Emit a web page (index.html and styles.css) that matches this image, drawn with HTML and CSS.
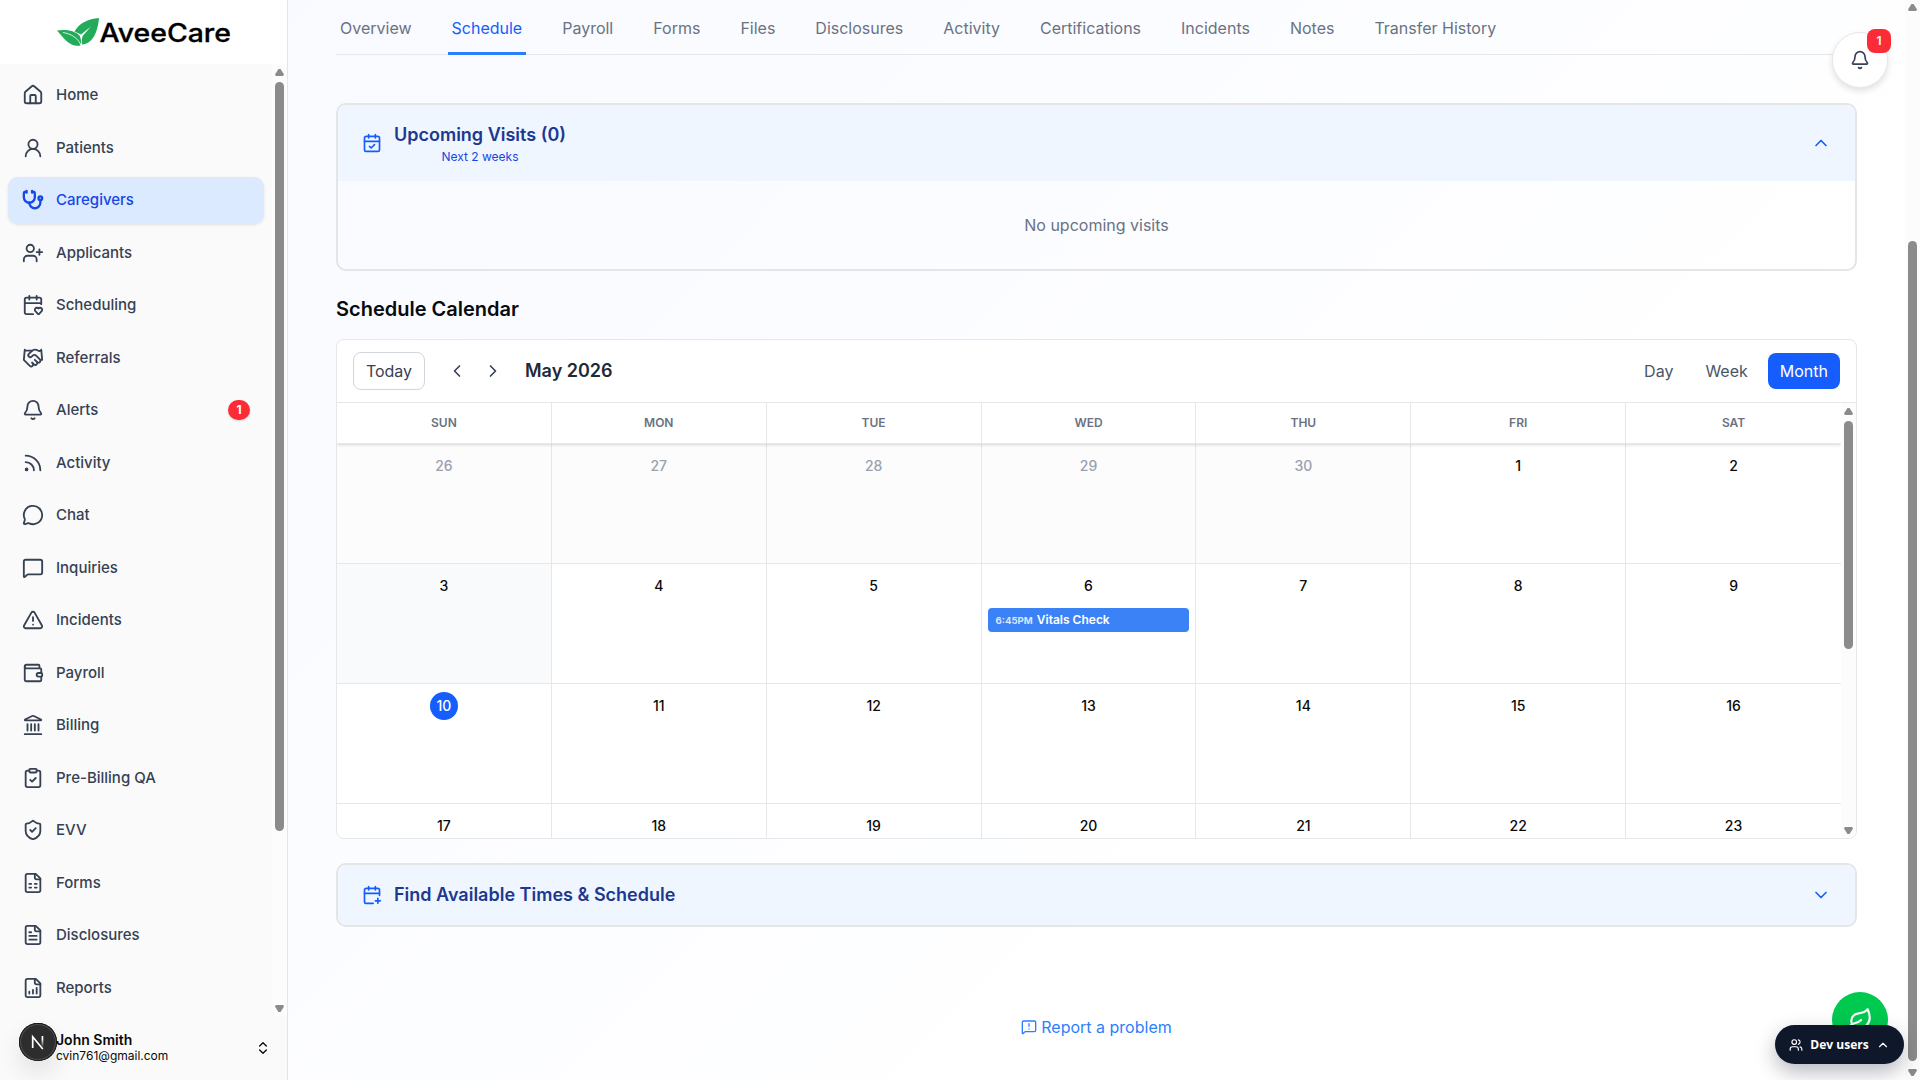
FILE: index.html
```html
<!DOCTYPE html>
<html lang="en">

<head>
    <meta charset="UTF-8">
    <meta name="viewport" content="width=device-width, initial-scale=1.0">
    <title>AveeCare</title>
    <link rel="stylesheet" href="styles.css">
</head>

<body>
    <!-- icons -->
    <svg class="sprite">
        <symbol id="home" viewBox="0 0 24 24"><path d="M15 21v-8a1 1 0 0 0-1-1h-4a1 1 0 0 0-1 1v8"/><path d="M3 10a2 2 0 0 1 .709-1.528l7-5.999a2 2 0 0 1 2.582 0l7 5.999A2 2 0 0 1 21 10v9a2 2 0 0 1-2 2H5a2 2 0 0 1-2-2z"/></symbol>
        <symbol id="user" viewBox="0 0 24 24"><circle cx="12" cy="8" r="5"/><path d="M20 21a8 8 0 0 0-16 0"/></symbol>
        <symbol id="stethoscope" viewBox="0 0 24 24"><path d="M11 2v2M5 2v2M5 3H4a2 2 0 0 0-2 2v4a6 6 0 0 0 12 0V5a2 2 0 0 0-2-2h-1"/><path d="M8 15a6 6 0 0 0 12 0v-3"/><circle cx="20" cy="10" r="2"/></symbol>
        <symbol id="user-plus" viewBox="0 0 24 24"><path d="M16 21v-2a4 4 0 0 0-4-4H6a4 4 0 0 0-4 4v2"/><circle cx="9" cy="7" r="4"/><path d="M19 8v6M22 11h-6"/></symbol>
        <symbol id="calendar-heart" viewBox="0 0 24 24"><path d="M12.127 22H5a2 2 0 0 1-2-2V6a2 2 0 0 1 2-2h14a2 2 0 0 1 2 2v5.125M3 10h18M8 2v4M16 2v4"/><path d="M14.62 18.8A2.25 2.25 0 1 1 18 15.836a2.25 2.25 0 1 1 3.38 2.966l-2.626 2.856a1 1 0 0 1-1.507 0z"/></symbol>
        <symbol id="handshake" viewBox="0 0 24 24"><path d="m11 17 2 2a1 1 0 1 0 3-3"/><path d="m14 14 2.5 2.5a1 1 0 1 0 3-3l-3.88-3.88a3 3 0 0 0-4.24 0l-.88.88a1 1 0 1 1-3-3l2.81-2.81a5.79 5.79 0 0 1 7.06-.87l.47.28a2 2 0 0 0 1.42.25L21 4"/><path d="m21 3 1 11h-2"/><path d="M3 3 2 14l6.5 6.5a1 1 0 1 0 3-3M3 4h8"/></symbol>
        <symbol id="bell" viewBox="0 0 24 24"><path d="M10.268 21a2 2 0 0 0 3.464 0"/><path d="M3.262 15.326A1 1 0 0 0 4 17h16a1 1 0 0 0 .74-1.673C19.41 13.956 18 12.499 18 8A6 6 0 0 0 6 8c0 4.499-1.411 5.956-2.738 7.326"/></symbol>
        <symbol id="rss" viewBox="0 0 24 24"><path d="M4 11a9 9 0 0 1 9 9"/><path d="M4 4a16 16 0 0 1 16 16"/><circle cx="5" cy="19" r="1"/></symbol>
        <symbol id="chat" viewBox="0 0 24 24"><path d="M2.992 16.342a2 2 0 0 1 .094 1.167l-1.065 3.29a1 1 0 0 0 1.236 1.168l3.413-.998a2 2 0 0 1 1.099.092 10 10 0 1 0-4.777-4.719"/></symbol>
        <symbol id="message" viewBox="0 0 24 24"><path d="M22 17a2 2 0 0 1-2 2H6.828a2 2 0 0 0-1.414.586l-2.202 2.202A.71.71 0 0 1 2 21.286V5a2 2 0 0 1 2-2h16a2 2 0 0 1 2 2z"/></symbol>
        <symbol id="warning" viewBox="0 0 24 24"><path d="m21.73 18-8-14a2 2 0 0 0-3.48 0l-8 14A2 2 0 0 0 4 21h16a2 2 0 0 0 1.73-3"/><path d="M12 9v4M12 17h.01"/></symbol>
        <symbol id="wallet" viewBox="0 0 24 24"><path d="M19 7V4a1 1 0 0 0-1-1H5a2 2 0 0 0 0 4h15a1 1 0 0 1 1 1v4h-3a2 2 0 0 0 0 4h3a1 1 0 0 0 1-1v-2a1 1 0 0 0-1-1"/><path d="M3 5v14a2 2 0 0 0 2 2h15a1 1 0 0 0 1-1v-4"/></symbol>
        <symbol id="bank" viewBox="0 0 24 24"><path d="M10 18v-7M14 18v-7M18 18v-7M6 18v-7M3 22h18"/><path d="M11.12 2.198a2 2 0 0 1 1.76.006l7.866 3.847c.476.233.31.949-.22.949H3.474c-.53 0-.695-.716-.22-.949z"/></symbol>
        <symbol id="clipboard" viewBox="0 0 24 24"><rect x="8" y="2" width="8" height="4" rx="1"/><path d="M16 4h2a2 2 0 0 1 2 2v14a2 2 0 0 1-2 2H6a2 2 0 0 1-2-2V6a2 2 0 0 1 2-2h2"/><path d="m9 14 2 2 4-4"/></symbol>
        <symbol id="shield" viewBox="0 0 24 24"><path d="M20 13c0 5-3.5 7.5-7.66 8.95a1 1 0 0 1-.67-.01C7.5 20.5 4 18 4 13V6a1 1 0 0 1 1-1c2 0 4.5-1.2 6.24-2.72a1.17 1.17 0 0 1 1.52 0C14.51 3.81 17 5 19 5a1 1 0 0 1 1 1z"/><path d="m9 12 2 2 4-4"/></symbol>
        <symbol id="file-form" viewBox="0 0 24 24"><path d="M15 2H6a2 2 0 0 0-2 2v16a2 2 0 0 0 2 2h12a2 2 0 0 0 2-2V7Z"/><path d="M14 2v4a2 2 0 0 0 2 2h4"/><path d="M8 13h2M14 13h2M8 17h2M14 17h2"/></symbol>
        <symbol id="file-text" viewBox="0 0 24 24"><path d="M15 2H6a2 2 0 0 0-2 2v16a2 2 0 0 0 2 2h12a2 2 0 0 0 2-2V7Z"/><path d="M14 2v4a2 2 0 0 0 2 2h4"/><path d="M10 9H8M16 13H8M16 17H8"/></symbol>
        <symbol id="file-chart" viewBox="0 0 24 24"><path d="M15 2H6a2 2 0 0 0-2 2v16a2 2 0 0 0 2 2h12a2 2 0 0 0 2-2V7Z"/><path d="M14 2v4a2 2 0 0 0 2 2h4"/><path d="M8 18v-2M12 18v-4M16 18v-6"/></symbol>
        <symbol id="up-down" viewBox="0 0 24 24"><path d="m7 15 5 5 5-5M7 9l5-5 5 5"/></symbol>
        <symbol id="calendar-check" viewBox="0 0 24 24"><path d="M8 2v4M16 2v4"/><rect x="3" y="4" width="18" height="18" rx="2"/><path d="M3 10h18M9 16l2 2 4-4"/></symbol>
        <symbol id="calendar-plus" viewBox="0 0 24 24"><path d="M16 19h6M16 2v4M19 16v6M3 10h18M8 2v4"/><path d="M21 12.598V6a2 2 0 0 0-2-2H5a2 2 0 0 0-2 2v14a2 2 0 0 0 2 2h8.5"/></symbol>
        <symbol id="up" viewBox="0 0 24 24"><path d="m18 15-6-6-6 6"/></symbol>
        <symbol id="down" viewBox="0 0 24 24"><path d="m6 9 6 6 6-6"/></symbol>
        <symbol id="left" viewBox="0 0 24 24"><path d="m15 18-6-6 6-6"/></symbol>
        <symbol id="right" viewBox="0 0 24 24"><path d="m9 18 6-6-6-6"/></symbol>
        <symbol id="report" viewBox="0 0 24 24"><path d="M22 17a2 2 0 0 1-2 2H6.828a2 2 0 0 0-1.414.586l-2.202 2.202A.71.71 0 0 1 2 21.286V5a2 2 0 0 1 2-2h16a2 2 0 0 1 2 2z"/><path d="M12 15h.01M12 7v4"/></symbol>
        <symbol id="leaf" viewBox="0 0 24 24"><path d="M11 20A7 7 0 0 1 9.8 6.1C15.5 5 17 4.48 19 2c1 2 2 4.18 2 8 0 5.5-4.78 10-10 10Z"/><path d="M2 21c0-3 1.85-5.36 5.08-6C9.5 14.52 12 13 13 12"/></symbol>
        <symbol id="users" viewBox="0 0 24 24"><path d="M16 21v-2a4 4 0 0 0-4-4H6a4 4 0 0 0-4 4v2"/><circle cx="9" cy="7" r="4"/><path d="M22 21v-2a4 4 0 0 0-3-3.87M16 3.13a4 4 0 0 1 0 7.75"/></symbol>
    </svg>

    <div class="app">
        <aside class="sidebar">
            <div class="logo">
                <svg width="176" height="32" viewBox="0 0 176 32">
                    <path class="logo-leaf" d="M43 1C42 14 37 27 26 27.500C25.600 24 25.500 21.500 27 18.500L35 9.500L25 17.500L18.500 14.500C23 6.500 32 1.500 43 1Z"/>
                    <path class="logo-leaf" d="M1 13.500C9 12 19 13.500 23.500 18.500C25 21.500 25.500 25 24.500 28.500C14 30.500 9 22.500 1 13.500Z"/>
                    <path class="logo-vein" d="M7 15.500C15 17 22 20.500 25 28.500"/>
                    <text class="logo-text" x="43.500" y="25" textLength="131.500" lengthAdjust="spacingAndGlyphs">AveeCare</text>
                </svg>
            </div>
            <div class="nav-wrap">
                <ul class="nav">
                    <li><svg class="icon"><use href="#home"/></svg>Home</li>
                    <li><svg class="icon"><use href="#user"/></svg>Patients</li>
                    <li class="active"><svg class="icon"><use href="#stethoscope"/></svg>Caregivers</li>
                    <li><svg class="icon"><use href="#user-plus"/></svg>Applicants</li>
                    <li><svg class="icon"><use href="#calendar-heart"/></svg>Scheduling</li>
                    <li><svg class="icon"><use href="#handshake"/></svg>Referrals</li>
                    <li><svg class="icon"><use href="#bell"/></svg>Alerts<span class="count">1</span></li>
                    <li><svg class="icon"><use href="#rss"/></svg>Activity</li>
                    <li><svg class="icon"><use href="#chat"/></svg>Chat</li>
                    <li><svg class="icon"><use href="#message"/></svg>Inquiries</li>
                    <li><svg class="icon"><use href="#warning"/></svg>Incidents</li>
                    <li><svg class="icon"><use href="#wallet"/></svg>Payroll</li>
                    <li><svg class="icon"><use href="#bank"/></svg>Billing</li>
                    <li><svg class="icon"><use href="#clipboard"/></svg>Pre-Billing QA</li>
                    <li><svg class="icon"><use href="#shield"/></svg>EVV</li>
                    <li><svg class="icon"><use href="#file-form"/></svg>Forms</li>
                    <li><svg class="icon"><use href="#file-text"/></svg>Disclosures</li>
                    <li><svg class="icon"><use href="#file-chart"/></svg>Reports</li>
                </ul>
                <div class="scrollbar scrollbar-nav">
                    <i class="arrow-up"></i>
                    <i class="thumb"></i>
                    <i class="arrow-down"></i>
                </div>
            </div>
            <div class="account">
                <div class="account-text">
                    <div class="account-name">John Smith</div>
                    <div class="account-mail">cvin761@gmail.com</div>
                </div>
                <svg class="icon icon-16"><use href="#up-down"/></svg>
            </div>
        </aside>

        <main>
            <ul class="tabs">
                <li>Overview</li>
                <li class="active">Schedule</li>
                <li>Payroll</li>
                <li>Forms</li>
                <li>Files</li>
                <li>Disclosures</li>
                <li>Activity</li>
                <li>Certifications</li>
                <li>Incidents</li>
                <li>Notes</li>
                <li>Transfer History</li>
            </ul>

            <section class="card visits">
                <div class="card-head">
                    <svg class="icon icon-20"><use href="#calendar-check"/></svg>
                    <div class="card-title">Upcoming Visits (0)<small>Next 2 weeks</small></div>
                    <svg class="icon icon-20"><use href="#up"/></svg>
                </div>
                <div class="card-body">No upcoming visits</div>
            </section>

            <h2>Schedule Calendar</h2>

            <section class="calendar">
                <div class="toolbar">
                    <button class="today">Today</button>
                    <svg class="icon icon-20 prev"><use href="#left"/></svg>
                    <svg class="icon icon-20 next"><use href="#right"/></svg>
                    <div class="month">May 2026</div>
                    <div class="views">
                        <span>Day</span>
                        <span>Week</span>
                        <span class="active">Month</span>
                    </div>
                </div>
                <div class="calendar-view">
                    <div class="calendar-main">
                        <div class="weekdays">
                            <div>SUN</div>
                            <div>MON</div>
                            <div>TUE</div>
                            <div>WED</div>
                            <div>THU</div>
                            <div>FRI</div>
                            <div>SAT</div>
                        </div>
                        <div class="days">
                            <div class="other"><b>26</b></div>
                            <div class="other"><b>27</b></div>
                            <div class="other"><b>28</b></div>
                            <div class="other"><b>29</b></div>
                            <div class="other"><b>30</b></div>
                            <div><b>1</b></div>
                            <div><b>2</b></div>
                            <div class="hover"><b>3</b></div>
                            <div><b>4</b></div>
                            <div><b>5</b></div>
                            <div><b>6</b><p class="event"><span>6:45PM</span>Vitals Check</p></div>
                            <div><b>7</b></div>
                            <div><b>8</b></div>
                            <div><b>9</b></div>
                            <div class="now"><b>10</b></div>
                            <div><b>11</b></div>
                            <div><b>12</b></div>
                            <div><b>13</b></div>
                            <div><b>14</b></div>
                            <div><b>15</b></div>
                            <div><b>16</b></div>
                            <div><b>17</b></div>
                            <div><b>18</b></div>
                            <div><b>19</b></div>
                            <div><b>20</b></div>
                            <div><b>21</b></div>
                            <div><b>22</b></div>
                            <div><b>23</b></div>
                        </div>
                    </div>
                    <div class="scrollbar scrollbar-calendar">
                        <i class="arrow-up"></i>
                        <i class="thumb"></i>
                        <i class="arrow-down"></i>
                    </div>
                </div>
            </section>

            <section class="card find">
                <div class="card-head">
                    <svg class="icon icon-20"><use href="#calendar-plus"/></svg>
                    <div class="card-title">Find Available Times &amp; Schedule</div>
                    <svg class="icon icon-20"><use href="#down"/></svg>
                </div>
            </section>

            <a class="report"><svg class="icon icon-16"><use href="#report"/></svg>Report a problem</a>
        </main>

        <div class="scrollbar scrollbar-page">
            <i class="arrow-up"></i>
            <i class="thumb"></i>
            <i class="arrow-down"></i>
        </div>
    </div>

    <!-- floating buttons -->
    <div class="bell"><svg class="icon icon-20"><use href="#bell"/></svg><span>1</span></div>
    <div class="leaf"><svg class="icon"><use href="#leaf"/></svg></div>
    <div class="dev-users">
        <svg class="icon icon-14"><use href="#users"/></svg>
        Dev users
        <svg class="icon icon-14"><use href="#up"/></svg>
    </div>
    <div class="next-badge">
        <svg width="38" height="38" viewBox="0 0 38 38">
            <defs>
                <linearGradient id="fade" x1="0" y1="0" x2="0" y2="1">
                    <stop offset="0.3" stop-color="#fff"/>
                    <stop offset="1" stop-color="#fff" stop-opacity="0.1"/>
                </linearGradient>
            </defs>
            <path d="M13.700 25V13.800L23.800 26" fill="none" stroke="#fff" stroke-width="1.700"/>
            <rect x="22.600" y="13" width="1.700" height="10.500" fill="url(#fade)"/>
        </svg>
    </div>
</body>

</html>
```
FILE: styles.css
```css
* {
    box-sizing: border-box;
}

body {
    margin: 0;
    height: 1080px;
    overflow: hidden;
    font-family: Inter, "Liberation Sans", sans-serif;
    font-size: 16px;
    line-height: 24px;
    color: #0a0a0a;
}

ul,
h2,
p {
    margin: 0;
    padding: 0;
    list-style: none;
}

.sprite {
    display: none;
}

.icon {
    width: 22px;
    height: 22px;
    flex: none;
    fill: none;
    stroke: currentColor;
    stroke-width: 2;
    stroke-linecap: round;
    stroke-linejoin: round;
}

.icon-20 {
    width: 20px;
    height: 20px;
}

.icon-16 {
    width: 16px;
    height: 16px;
}

.icon-14 {
    width: 14px;
    height: 14px;
}

.app {
    display: flex;
    height: 1080px;
}

/* sidebar */
.sidebar {
    display: flex;
    flex-direction: column;
    flex: none;
    width: 288px;
    background: #fafafa;
    border-right: 1px solid #e5e5e5;
}

.logo {
    height: 64px;
    padding: 17px 0 0 56px;
    background: #fff;
}

.logo svg {
    display: block;
}

.logo-leaf {
    fill: #22ab59;
}

.logo-vein {
    fill: none;
    stroke: #fff;
    stroke-width: 0.8;
}

.logo-text {
    font-size: 25px;
    font-weight: 500;
    fill: #000;
    stroke: #000;
    stroke-width: 0.3;
}

.nav-wrap {
    display: flex;
    height: 952px;
}

.nav {
    flex: 1;
    padding: 7.650px 8px 0;
}

.nav li {
    display: flex;
    align-items: center;
    gap: 12px;
    height: 47.500px;
    margin-bottom: 5px;
    padding: 0 14px;
    border-radius: 10px;
    font-size: 15px;
    font-weight: 500;
    color: #364153;
}

.nav li.active {
    background: #dbeafe;
    color: #1447e6;
    box-shadow: 0 1px 3px rgba(0, 0, 0, 0.1);
}

.nav li.active .icon {
    stroke-width: 2.500;
}

.count {
    margin-left: auto;
    width: 22px;
    height: 20px;
    border-radius: 10px;
    background: #fb2c36;
    color: #fff;
    font-size: 12px;
    font-weight: 700;
    line-height: 20px;
    text-align: center;
    box-shadow: 0 1px 2px rgba(0, 0, 0, 0.15);
}

.account {
    display: flex;
    align-items: center;
    justify-content: space-between;
    height: 64px;
    padding: 0 16px 0 56px;
    color: #0a0a0a;
}

.account-name {
    font-size: 14px;
    font-weight: 600;
    line-height: 16px;
}

.account-mail {
    font-size: 12px;
    line-height: 16px;
}

/* scrollbars */
.scrollbar {
    display: flex;
    flex-direction: column;
    align-items: center;
    justify-content: space-between;
    flex: none;
    width: 15px;
    padding: 4px 0;
    background: #fcfcfc;
}

.arrow-up,
.arrow-down {
    width: 9px;
    height: 7px;
    background: #8b8b8b;
    clip-path: polygon(38% 0, 62% 0, 100% 80%, 90% 100%, 10% 100%, 0 80%);
}

.arrow-down {
    transform: rotate(180deg);
}

.thumb {
    width: 9px;
    margin-bottom: auto;
    margin-top: 6px;
    border-radius: 5px;
    background: #8b8b8b;
}

.scrollbar-nav {
    padding-top: 5px;
}

.scrollbar-nav .thumb {
    height: 749px;
}

.scrollbar-calendar {
    padding-top: 5px;
}

.scrollbar-calendar .thumb {
    height: 228px;
}

.scrollbar-page .thumb {
    height: 820px;
    margin-top: 230px;
}

/* content */
main {
    flex: 1;
    display: flex;
    flex-direction: column;
    padding: 0 48px;
    background: linear-gradient(135deg, #f8faff 0%, #fff 70%);
}

.tabs {
    display: flex;
    gap: 32px;
    height: 55px;
    border-bottom: 1px solid #e5e7eb;
    color: #6a7282;
}

.tabs li {
    height: 55px;
    padding: 16px 4px 0;
}

.tabs .active {
    color: #155dfc;
    border-bottom: 3px solid #2b7fff;
}

.card {
    border: 2px solid #e5e5e5;
    border-radius: 10px;
    overflow: hidden;
}

.card-head {
    display: flex;
    align-items: center;
    gap: 12px;
    padding: 0 24px;
    background: #eff6ff;
    color: #155dfc;
}

.card-head .icon:last-child {
    margin-left: auto;
}

.card-title {
    font-size: 18px;
    font-weight: 600;
    line-height: 28px;
    text-align: center;
    color: #1c398e;
}

.card-title small {
    display: block;
    font-size: 12px;
    font-weight: 400;
    line-height: 16px;
    color: #1447e6;
}

.visits {
    margin-top: 48px;
    height: 168px;
}

.visits .card-head {
    height: 76px;
}

.card-body {
    padding-top: 32px;
    text-align: center;
    color: #6a7282;
}

h2 {
    margin-top: 24px;
    font-size: 20px;
    font-weight: 600;
    line-height: 28px;
}

.calendar {
    margin-top: 16px;
    height: 500px;
    border: 1px solid #e5e7eb;
    border-radius: 8px;
    background: #fff;
    overflow: hidden;
}

.toolbar {
    display: flex;
    align-items: center;
    height: 63px;
    padding: 0 16px;
    border-bottom: 1px solid #e5e7eb;
    color: #364153;
}

.today {
    width: 72px;
    height: 38px;
    padding: 0;
    border: 1px solid #d1d5dc;
    border-radius: 8px;
    background: #fff;
    font: inherit;
    color: inherit;
}

.prev {
    margin-left: 22px;
}

.next {
    margin-left: 16px;
}

.month {
    margin-left: 22px;
    font-size: 18px;
    font-weight: 600;
    color: #1e2939;
}

.views {
    display: flex;
    gap: 8px;
    margin-left: auto;
}

.views span {
    height: 36px;
    padding: 0 12px;
    border-radius: 8px;
    line-height: 36px;
    color: #4a5565;
}

.views .active {
    background: #155dfc;
    color: #fff;
}

.calendar-view {
    display: flex;
    height: 435px;
}

.calendar-main {
    flex: 1;
    overflow: hidden;
}

.weekdays,
.days {
    display: grid;
    grid-template-columns: repeat(7, 1fr);
}

.weekdays {
    position: relative;
    height: 41px;
    border-bottom: 1px solid #e5e7eb;
    box-shadow: 0 1px 3px rgba(0, 0, 0, 0.15);
    background: #fff;
}

.weekdays div {
    border-right: 1px solid #e5e7eb;
    font-size: 12px;
    font-weight: 600;
    line-height: 40px;
    text-align: center;
    color: #6a7282;
}

.days {
    grid-auto-rows: 120px;
}

.days div {
    padding: 8px 6px;
    border-right: 1px solid #e5e7eb;
    border-bottom: 1px solid #e5e7eb;
}

.weekdays div:last-child,
.days div:nth-child(7n) {
    border-right: 0;
}

.days b {
    display: block;
    width: 28px;
    height: 28px;
    margin: 0 auto;
    border-radius: 50%;
    font-size: 14px;
    font-weight: 500;
    line-height: 28px;
    text-align: center;
}

.days .other {
    background: #fcfcfc;
}

.days .other b {
    color: #99a1af;
}

.days .hover {
    background: #f9fafb;
}

.days .now b {
    background: #155dfc;
    color: #fff;
}

.event {
    height: 24px;
    margin-top: 8px;
    padding: 0 8px;
    border-radius: 4px;
    background: #3b82f6;
    color: #fff;
    font-size: 12px;
    font-weight: 600;
    line-height: 24px;
}

.event span {
    margin-right: 4px;
    font-size: 9.600px;
    font-weight: 700;
    opacity: 0.8;
}

.find {
    margin-top: 24px;
    height: 64px;
}

.find .card-head {
    height: 60px;
}

.report {
    display: flex;
    align-items: center;
    justify-content: center;
    gap: 4px;
    margin-top: 88px;
    color: #2b7fff;
}

/* floating buttons */
.bell {
    position: absolute;
    top: 32px;
    left: 1832px;
    display: flex;
    align-items: center;
    justify-content: center;
    width: 56px;
    height: 56px;
    border: 1px solid #e5e7eb;
    border-radius: 50%;
    background: #fff;
    color: #364153;
    box-shadow: 0 3px 6px rgba(0, 0, 0, 0.12);
}

.bell span {
    position: absolute;
    top: -4px;
    right: -4px;
    width: 24px;
    height: 24px;
    border-radius: 8px;
    background: #fb2c36;
    color: #fff;
    font-size: 12px;
    font-weight: 600;
    line-height: 24px;
    text-align: center;
}

.leaf {
    position: absolute;
    top: 992px;
    left: 1832px;
    display: flex;
    align-items: center;
    justify-content: center;
    width: 56px;
    height: 56px;
    border-radius: 50%;
    background: #00c950;
    color: #fff;
}

.leaf .icon {
    width: 26px;
    height: 26px;
}

.dev-users {
    position: absolute;
    top: 1025px;
    left: 1775px;
    display: flex;
    align-items: center;
    justify-content: space-between;
    width: 129px;
    height: 39px;
    padding: 0 14px;
    border-radius: 20px;
    background: #0f172b;
    color: #fff;
    font-family: "Open Sans", sans-serif;
    font-size: 12px;
    font-weight: 700;
    box-shadow: 0 8px 20px rgba(15, 23, 43, 0.3);
}

.next-badge {
    position: absolute;
    top: 1023px;
    left: 19px;
    width: 38px;
    height: 38px;
    border-radius: 50%;
    background: #2d2d2d;
    box-shadow: inset 0 0 0 1px #171717, inset 0 0 0 2px #505050, 0 12px 24px rgba(0, 0, 0, 0.1);
}

.next-badge svg {
    display: block;
}
```
